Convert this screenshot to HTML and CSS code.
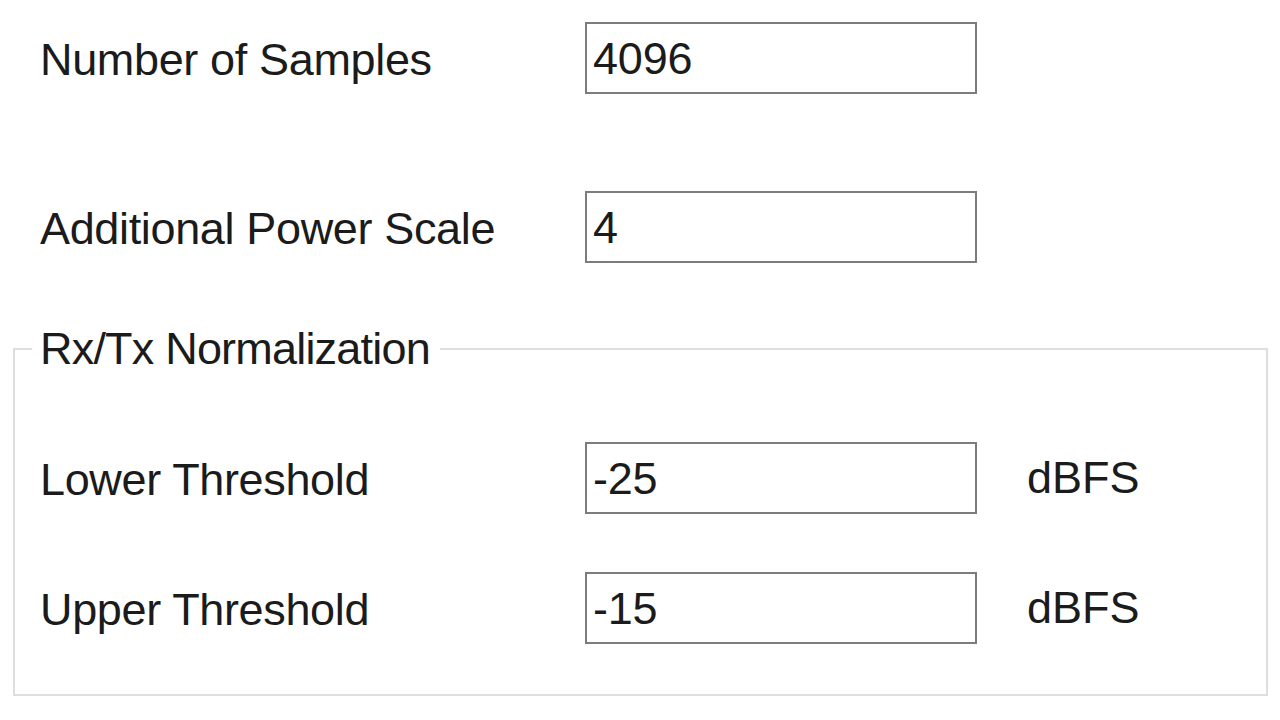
FILE: index.html
```html
<!DOCTYPE html>
<html lang="en">
<head>
  <meta charset="UTF-8" />
  <meta name="viewport" content="width=device-width, initial-scale=1.0" />
  <title>Power Settings</title>
  <link rel="stylesheet" href="styles.css">
</head>
<body>
  <div class="settings">
    <div class="row">
      <label for="samples">Number of Samples</label>
      <input type="text" id="samples" value="4096" />
    </div>
    <div class="row row-second">
      <label for="scale">Additional Power Scale</label>
      <input type="text" id="scale" value="4" />
    </div>

    <fieldset class="group">
      <legend>Rx/Tx Normalization</legend>
      <div class="row">
        <label for="lower">Lower Threshold</label>
        <input type="text" id="lower" value="-25" />
        <span class="unit">dBFS</span>
      </div>
      <div class="row row-gap">
        <label for="upper">Upper Threshold</label>
        <input type="text" id="upper" value="-15" />
        <span class="unit">dBFS</span>
      </div>
    </fieldset>
  </div>
</body>
</html>
```

FILE: styles.css
```css
* {
  box-sizing: border-box;
}
body {
  margin: 0;
  padding: 0;
  background: #fff;
  color: #1b1b1b;
  font-family: 'Liberation Sans', Arial, sans-serif;
  font-size: 45px;
}
.settings {
  padding: 22px 0 0 0;
}
.row {
  display: grid;
  grid-template-columns: 545px 392px auto;
  align-items: center;
  height: 72px;
  padding-left: 40px;
}
.row-second {
  margin-top: 97px;
}
.row label {
  letter-spacing: -0.35px;
  padding-top: 4px;
}
.row input {
  width: 392px;
  height: 72px;
  border: 2px solid #7c7c7c;
  background: #fff;
  padding: 2px 6px 0;
  font-family: inherit;
  font-size: 45px;
  color: #1b1b1b;
  letter-spacing: -0.2px;
  outline: none;
}
.unit {
  margin-left: 50px;
}
.group {
  margin: 60px 0 0 13px;
  width: 1255px;
  height: 373px;
  border: 2px solid #dedede;
  padding: 67px 0 0 25px;
}
.group legend {
  margin-left: -8px;
  padding: 0 10px 0 8px;
  line-height: 52px;
  letter-spacing: -0.8px;
}
.group .row {
  padding-left: 0;
}
.row-gap {
  margin-top: 58px;
}
```
